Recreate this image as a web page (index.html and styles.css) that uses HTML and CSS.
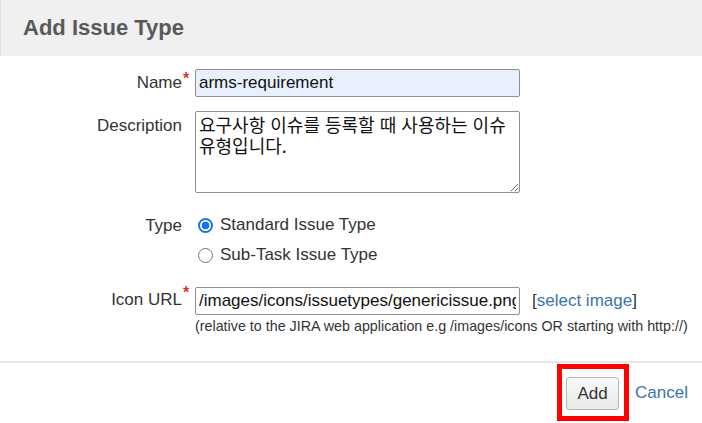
FILE: index.html
```html
<!DOCTYPE html>
<html lang="ko">
<head>
<meta charset="utf-8">
<title>Add Issue Type</title>
<link rel="stylesheet" href="styles.css">
</head>
<body>
<div class="dialog">
  <header class="dialog-header">
    <h2 class="dialog-title">Add Issue Type</h2>
  </header>
  <form class="dialog-body">
    <div class="field-row row-name">
      <label class="field-label" for="name">Name<span class="req">*</span></label>
      <div class="field-control">
        <input id="name" class="text-input autofilled" type="text" value="arms-requirement">
      </div>
    </div>
    <div class="field-row row-desc">
      <label class="field-label label-top" for="desc">Description</label>
      <div class="field-control">
        <textarea id="desc" class="textarea">요구사항 이슈를 등록할 때 사용하는 이슈 유형입니다.</textarea>
      </div>
    </div>
    <div class="field-row row-type">
      <span class="field-label label-top">Type</span>
      <div class="field-control radios">
        <label class="radio-line"><input class="radio" type="radio" name="type" checked> Standard Issue Type</label>
        <label class="radio-line"><input class="radio" type="radio" name="type"> Sub-Task Issue Type</label>
      </div>
    </div>
    <div class="field-row row-icon">
      <label class="field-label" for="icon">Icon URL<span class="req">*</span></label>
      <div class="field-control">
        <div class="icon-line">
          <input id="icon" class="text-input" type="text" value="/images/icons/issuetypes/genericissue.png">
          <span class="select-image">[<a href="#" class="link">select image</a>]</span>
        </div>
        <div class="help">(relative to the JIRA web application e.g /images/icons OR starting with http://)</div>
      </div>
    </div>
  </form>
  <footer class="dialog-footer">
    <span class="highlight"><button class="btn" type="button">Add</button></span>
    <a href="#" class="link cancel">Cancel</a>
  </footer>
</div>
</body>
</html>
```

FILE: styles.css
```css
* { box-sizing: border-box; }
html, body {
  margin: 0;
  padding: 0;
  background: #ffffff;
}
body {
  font-family: "Liberation Sans", Arial, "Noto Sans CJK KR", sans-serif;
  font-size: 17px;
  color: #333333;
}
.dialog {
  width: 702px;
  height: 423px;
  overflow: hidden;
}
.dialog-header {
  height: 56px;
  background: #f0f0f0;
  border-left: 1px solid #e2e2e2;
  display: flex;
  align-items: center;
  padding-left: 22px;
}
.dialog-title {
  margin: 0;
  font-size: 22px;
  font-weight: bold;
  color: #595959;
}
.dialog-body {
  margin: 0;
  padding-top: 13px;
  height: 307px;
  border-bottom: 2px solid #e8e8e8;
}
.field-row {
  display: grid;
  grid-template-columns: 195px 1fr;
  align-items: center;
}
.field-label {
  position: relative;
  justify-self: end;
  margin-right: 13px;
  color: #333333;
  white-space: nowrap;
}
.label-top { align-self: start; }
.req {
  position: absolute;
  left: 100%;
  top: -3px;
  margin-left: 1px;
  color: #c8402f;
  font-size: 16px;
  font-weight: bold;
}
.text-input {
  width: 325px;
  height: 28px;
  border: 1px solid #8f8f8f;
  border-radius: 2px;
  padding: 0 3px;
  font-family: "Liberation Sans", Arial, sans-serif;
  font-size: 17px;
  color: #111111;
  background: #ffffff;
  outline: none;
}
.autofilled { background: #e8f0fe; }
.row-desc { margin-top: 14px; }
.row-desc .label-top { padding-top: 5px; }
.textarea {
  display: block;
  width: 325px;
  height: 82px;
  border: 1px solid #8f8f8f;
  border-radius: 2px;
  padding: 2px 3px;
  font-family: "Noto Sans CJK KR", "Liberation Sans", sans-serif;
  font-size: 18px;
  line-height: 21px;
  color: #111111;
  resize: both;
  outline: none;
}
.row-type { margin-top: 22px; }
.row-type .label-top { padding-top: 1px; }
.radios {
  display: flex;
  flex-direction: column;
  gap: 10px;
}
.radio-line {
  display: flex;
  align-items: center;
  gap: 7px;
  height: 20px;
  color: #333333;
}
.radio {
  appearance: none;
  -webkit-appearance: none;
  margin: 0 0 0 3px;
  width: 15px;
  height: 15px;
  border: 1.5px solid #767676;
  border-radius: 50%;
  background: #ffffff;
}
.radio:checked {
  border: 2px solid #1a73e8;
  background: radial-gradient(circle, #1a73e8 0 3.6px, #ffffff 4.2px);
}
.row-icon { margin-top: 22px; align-items: start; }
.row-icon .field-label { padding-top: 3px; }
.icon-line {
  display: flex;
  align-items: center;
  gap: 12px;
}
.select-image { color: #333333; }
.link {
  color: #3b73af;
  text-decoration: none;
}
.help {
  margin-top: 3px;
  font-size: 14.3px;
  color: #333333;
  white-space: nowrap;
}
.dialog-footer {
  display: flex;
  justify-content: flex-end;
  align-items: center;
  padding: 1px 14px 0 0;
  gap: 6px;
}
.highlight {
  display: inline-flex;
  border: 5px solid #ff0000;
  padding: 8px 5px 6px 4px;
}
.btn {
  width: 53px;
  height: 33px;
  border: 1px solid #b5b5b5;
  border-radius: 3px;
  background: linear-gradient(#fafafa, #e9e9e9);
  font-family: "Liberation Sans", Arial, sans-serif;
  font-size: 17px;
  color: #333333;
  padding: 0;
}
.cancel { font-size: 17px; }
```
